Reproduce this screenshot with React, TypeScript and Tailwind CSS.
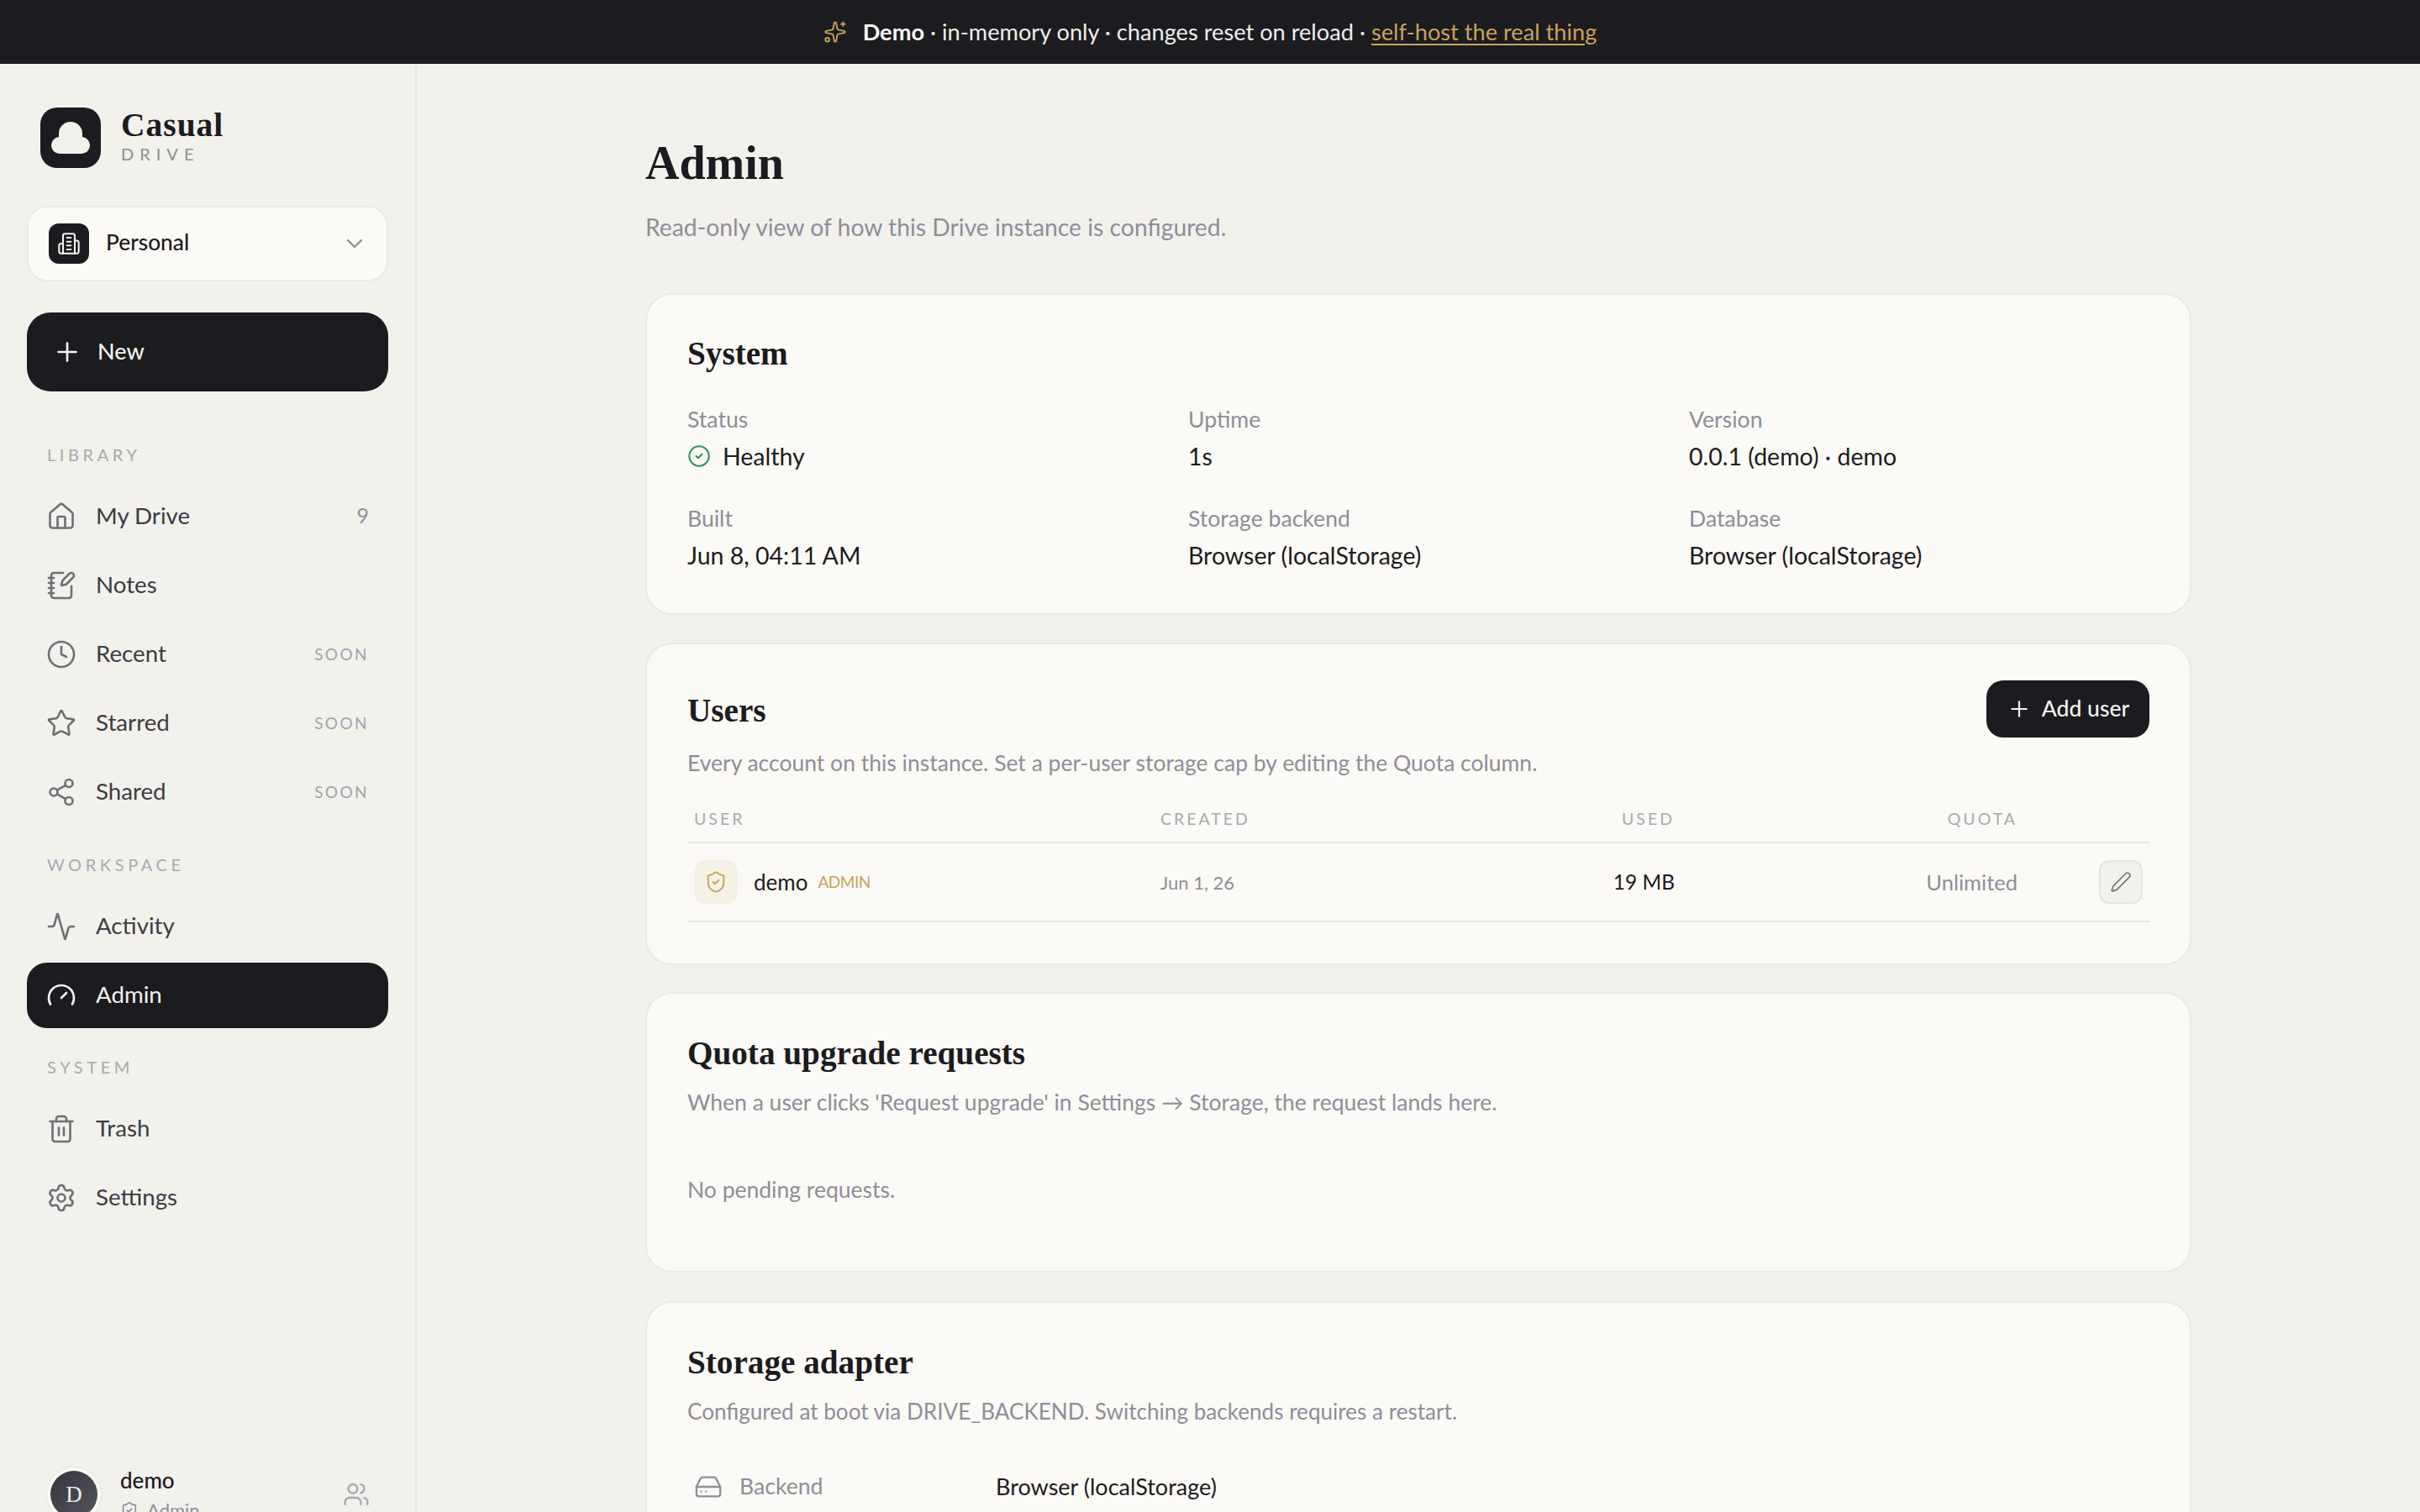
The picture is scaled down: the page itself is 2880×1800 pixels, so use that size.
import React from "react";
import {
  Sparkles, ChevronDown, Plus, House, NotebookPen, Clock, Star, Share2, Activity, Gauge, Trash2, Settings, Users, ShieldCheck, CircleCheck, Pen, HardDrive,
} from "lucide-react";

const serif = "font-['Liberation_Serif',serif]";

function Building(props: { className?: string }) {
  return (
    <svg viewBox="0 0 24 24" fill="none" stroke="currentColor" strokeWidth="1.75" strokeLinecap="round" strokeLinejoin="round" className={props.className}>
      <path d="M6 22V4a2 2 0 0 1 2-2h8a2 2 0 0 1 2 2v18Z" />
      <path d="M6 12H4a2 2 0 0 0-2 2v6a2 2 0 0 0 2 2h2" />
      <path d="M18 9h2a2 2 0 0 1 2 2v9a2 2 0 0 1-2 2h-2" />
      <path d="M10 6h4" /><path d="M10 10h4" /><path d="M10 14h4" /><path d="M10 18h4" />
    </svg>
  );
}

function NavItem({ icon: Icon, label, badge, soon, active }: { icon: any; label: string; badge?: string; soon?: boolean; active?: boolean }) {
  return (
    <div className={`flex items-center h-[78px] pl-[23px] pr-[23px] gap-[23px] rounded-[24px] ${active ? "bg-[#1b1b20] text-[#f4f3ee]" : "text-[#3c3c44]"}`}>
      <Icon className={`w-[36px] h-[36px] shrink-0 ${active ? "text-[#f4f3ee]" : "text-[#6f6f78]"}`} strokeWidth={1.75} />
      <span className="text-[27.7px] flex-1 -translate-y-px">{label}</span>
      {badge && <span className="text-[25px] text-[#8e8e99] -translate-y-px">{badge}</span>}
      {soon && <span className="text-[19px] tracking-[2.4px] text-[#a3a3ac]">SOON</span>}
    </div>
  );
}

function SectionLabel({ children, className }: { children: string; className: string }) {
  return <div className={`h-[28px] pl-[24px] flex items-center text-[20px] tracking-[4.6px] text-[#a9a9b2] ${className}`}>{children}</div>;
}

function Sidebar() {
  return (
    <aside className="w-[496px] shrink-0 border-r-2 border-[#e8e7e2] px-[32px] flex flex-col">
      <div className="flex items-center gap-[24px] pl-[16px] pt-[52px]">
        <div className="w-[72px] h-[72px] rounded-[20px] bg-[#1b1b20] flex items-center justify-center">
          <svg viewBox="0 0 46 38" className="w-[46px] h-[38px]" fill="#f2f1ec">
            <path d="M10 38a10 10 0 0 1-1-19.95V14a14 14 0 0 1 28 0v4.05A10 10 0 0 1 36 38Z" />
          </svg>
        </div>
        <div className="flex flex-col -translate-y-[3px]">
          <span className={`${serif} text-[39.5px] leading-[44px] font-bold text-[#1b1b20] tracking-[1px]`}>Casual</span>
          <span className="text-[20px] leading-[24px] tracking-[7px] text-[#8e8e99]">DRIVE</span>
        </div>
      </div>
      <div className="mt-[45px] h-[90px] rounded-[24px] border-2 border-[#eceae5] bg-[#fbfaf6] flex items-center pl-[24px] pr-[22px] gap-[20px]">
        <div className="w-[48px] h-[48px] rounded-[12px] bg-[#1b1b20] flex items-center justify-center">
          <Building className="w-[28px] h-[28px] text-[#f4f3ee]" />
        </div>
        <span className="text-[26.3px] flex-1 font-medium text-[#1b1b20] -translate-y-px">Personal</span>
        <ChevronDown className="w-[32px] h-[32px] text-[#8e8e99]" strokeWidth={1.75} />
      </div>
      <div className="mt-[37px] h-[94px] rounded-[28px] bg-[#1b1b20] text-[#f4f3ee] flex items-center pl-[30px] gap-[18px]">
        <Plus className="w-[36px] h-[36px]" strokeWidth={1.75} />
        <span className="text-[27px] font-medium -translate-y-px">New</span>
      </div>
      <SectionLabel className="mt-[61px] mb-[21px]">LIBRARY</SectionLabel>
      <div className="flex flex-col gap-[4px]">
        <NavItem icon={House} label="My Drive" badge="9" />
        <NavItem icon={NotebookPen} label="Notes" />
        <NavItem icon={Clock} label="Recent" soon />
        <NavItem icon={Star} label="Starred" soon />
        <NavItem icon={Share2} label="Shared" soon />
      </div>
      <SectionLabel className="mt-[33px] mb-[21px]">WORKSPACE</SectionLabel>
      <div className="flex flex-col gap-[4px]">
        <NavItem icon={Activity} label="Activity" />
        <NavItem icon={Gauge} label="Admin" active />
      </div>
      <SectionLabel className="mt-[32px] mb-[21px]">SYSTEM</SectionLabel>
      <div className="flex flex-col gap-[4px]">
        <NavItem icon={Trash2} label="Trash" />
        <NavItem icon={Settings} label="Settings" />
      </div>
      <div className="mt-auto pb-[64px] flex items-center pl-[23px] pr-[22px] gap-[22px]">
        <div className="w-[66px] h-[66px] rounded-full bg-[#fbfaf6] border border-[#e8e7e2] flex items-center justify-center shrink-0">
          <div className="w-[56px] h-[56px] rounded-full bg-gradient-to-br from-[#35353d] to-[#54545d] flex items-center justify-center">
            <span className={`${serif} text-[27px] text-[#eeede8]`}>D</span>
          </div>
        </div>
        <div className="flex-1 flex flex-col gap-[8px]">
          <span className="text-[26px] leading-[30px] font-medium text-[#1b1b20]">demo</span>
          <span className="text-[22px] leading-[26px] text-[#8e8e99] flex items-center gap-[10px]">
            <ShieldCheck className="w-[22px] h-[22px]" strokeWidth={1.75} />Admin
          </span>
        </div>
        <Users className="w-[32px] h-[32px] text-[#a9a9b2]" strokeWidth={1.75} />
      </div>
    </aside>
  );
}

function Card({ children, className }: { children: React.ReactNode; className: string }) {
  return <section className={`bg-[#fbfaf6] border-2 border-[#eceae5] rounded-[32px] px-[48px] ${className}`}>{children}</section>;
}

function Info({ label, value, icon }: { label: string; value: string; icon?: boolean }) {
  return (
    <div className="flex flex-col">
      <span className="text-[26.6px] leading-[36px] text-[#8e8e99]">{label}</span>
      <span className="mt-[4px] text-[28.5px] leading-[44px] text-[#1b1b20] flex items-center gap-[14px]">
        {icon && <CircleCheck className="w-[28px] h-[28px] text-[#2f8f5b]" strokeWidth={1.75} />}
        {value}
      </span>
    </div>
  );
}

function Title({ children }: { children: string }) {
  return <h2 className={`${serif} text-[39.2px] leading-[48px] font-bold text-[#1b1b20]`}>{children}</h2>;
}

const desc = "text-[26.5px] leading-[36px] text-[#8e8e99]";
const th = "text-[19.5px] tracking-[3px] text-[#a9a9b2]";
const cols = "grid grid-cols-[563px_300px_312px_408px_157px] items-center";

export default function App() {
  return (
    <div className="h-screen overflow-hidden bg-[#f2f1ec] font-[Lato,sans-serif]">
      <div className="h-[76px] bg-[#1b1b20] flex items-center justify-center gap-[19px] text-[27.2px] text-[#efeee9]">
        <Sparkles className="w-[28px] h-[28px] text-[#c9a257]" strokeWidth={1.6} />
        <span>
          <span className="font-bold text-[#fbfaf6]">Demo</span> · in-memory only · changes reset on reload · <span className="text-[#c9a257] underline underline-offset-[4px]">self-host the real thing</span>
        </span>
      </div>
      <div className="h-screen flex">
        <Sidebar />
        <main className="flex-1 min-w-0">
          <div className="w-[1840px] mx-auto pt-[82px] flex flex-col">
            <h1 className={`${serif} text-[56px] leading-[72px] font-bold text-[#1b1b20]`}>Admin</h1>
            <p className="mt-[20px] text-[28.3px] leading-[40px] text-[#8e8e99]">Read-only view of how this Drive instance is configured.</p>
            <Card className="mt-[59px] h-[383px] pt-[46px]">
              <Title>System</Title>
              <div className="mt-[36px] grid grid-cols-3 gap-x-[48px] gap-y-[34px]">
                <Info label="Status" value="Healthy" icon />
                <Info label="Uptime" value="1s" />
                <Info label="Version" value="0.0.1 (demo) · demo" />
                <Info label="Built" value="Jun 8, 04:11 AM" />
                <Info label="Storage backend" value="Browser (localStorage)" />
                <Info label="Database" value="Browser (localStorage)" />
              </div>
            </Card>
            <Card className="mt-[33px] h-[384px] pt-[43px]">
              <div className="flex items-start justify-between">
                <div className="pt-[12px]">
                  <Title>Users</Title>
                  <p className={`mt-[20px] ${desc}`}>Every account on this instance. Set a per-user storage cap by editing the Quota column.</p>
                </div>
                <div className="h-[68px] w-[194px] rounded-[20px] bg-[#1b1b20] text-[#f4f3ee] flex items-center justify-center gap-[12px]">
                  <Plus className="w-[30px] h-[30px]" strokeWidth={1.75} />
                  <span className="text-[26.5px] font-medium">Add user</span>
                </div>
              </div>
              <div className={`mt-[28px] h-[50px] ${cols} border-b-2 border-[#e8e7e2] pb-[6px]`}>
                <span className={`pl-[8px] ${th}`}>USER</span>
                <span className={th}>CREATED</span>
                <span className={`${th} text-right`}>USED</span>
                <span className={`${th} text-right`}>QUOTA</span>
                <span />
              </div>
              <div className={`h-[94px] ${cols} border-b-2 border-[#e8e7e2]`}>
                <div className="pl-[8px] flex items-center">
                  <div className="w-[52px] h-[52px] rounded-[14px] bg-[#f5f1e6] flex items-center justify-center">
                    <ShieldCheck className="w-[28px] h-[28px] text-[#c9a257]" strokeWidth={1.6} />
                  </div>
                  <span className="ml-[19px] text-[26px] text-[#1b1b20]">demo</span>
                  <span className="ml-[12px] text-[19px] tracking-[-0.5px] text-[#c9a257]">ADMIN</span>
                </div>
                <span className="text-[22px] text-[#8e8e99]">Jun 1, 26</span>
                <span className="text-[24.5px] text-[#1b1b20] text-right">19 MB</span>
                <span className="text-[25.5px] text-[#8e8e99] text-right">Unlimited</span>
                <div className="flex justify-end pr-[8px]">
                  <div className="w-[52px] h-[52px] rounded-[12px] bg-[#f2f1ec] border-2 border-[#e6e5e0] flex items-center justify-center">
                    <Pen className="w-[26px] h-[26px] text-[#77777f]" strokeWidth={1.6} />
                  </div>
                </div>
              </div>
            </Card>
            <Card className="mt-[32px] h-[334px] pt-[47px]">
              <Title>Quota upgrade requests</Title>
              <p className={`mt-[16px] ${desc}`}>When a user clicks 'Request upgrade' in Settings → Storage, the request lands here.</p>
              <p className={`mt-[68px] ${desc}`}>No pending requests.</p>
            </Card>
            <Card className="mt-[34px] h-[400px] pt-[47px]">
              <Title>Storage adapter</Title>
              <p className={`mt-[16px] text-[26.1px] leading-[36px] text-[#8e8e99]`}>Configured at boot via DRIVE_BACKEND. Switching backends requires a restart.</p>
              <div className="mt-[52px] flex items-center pl-[8px]">
                <HardDrive className="w-[34px] h-[34px] text-[#8e8e99]" strokeWidth={1.6} />
                <span className="ml-[20px] w-[305px] text-[26.6px] text-[#8e8e99]">Backend</span>
                <span className="text-[27px] text-[#1b1b20]">Browser (localStorage)</span>
              </div>
            </Card>
          </div>
        </main>
      </div>
    </div>
  );
}
